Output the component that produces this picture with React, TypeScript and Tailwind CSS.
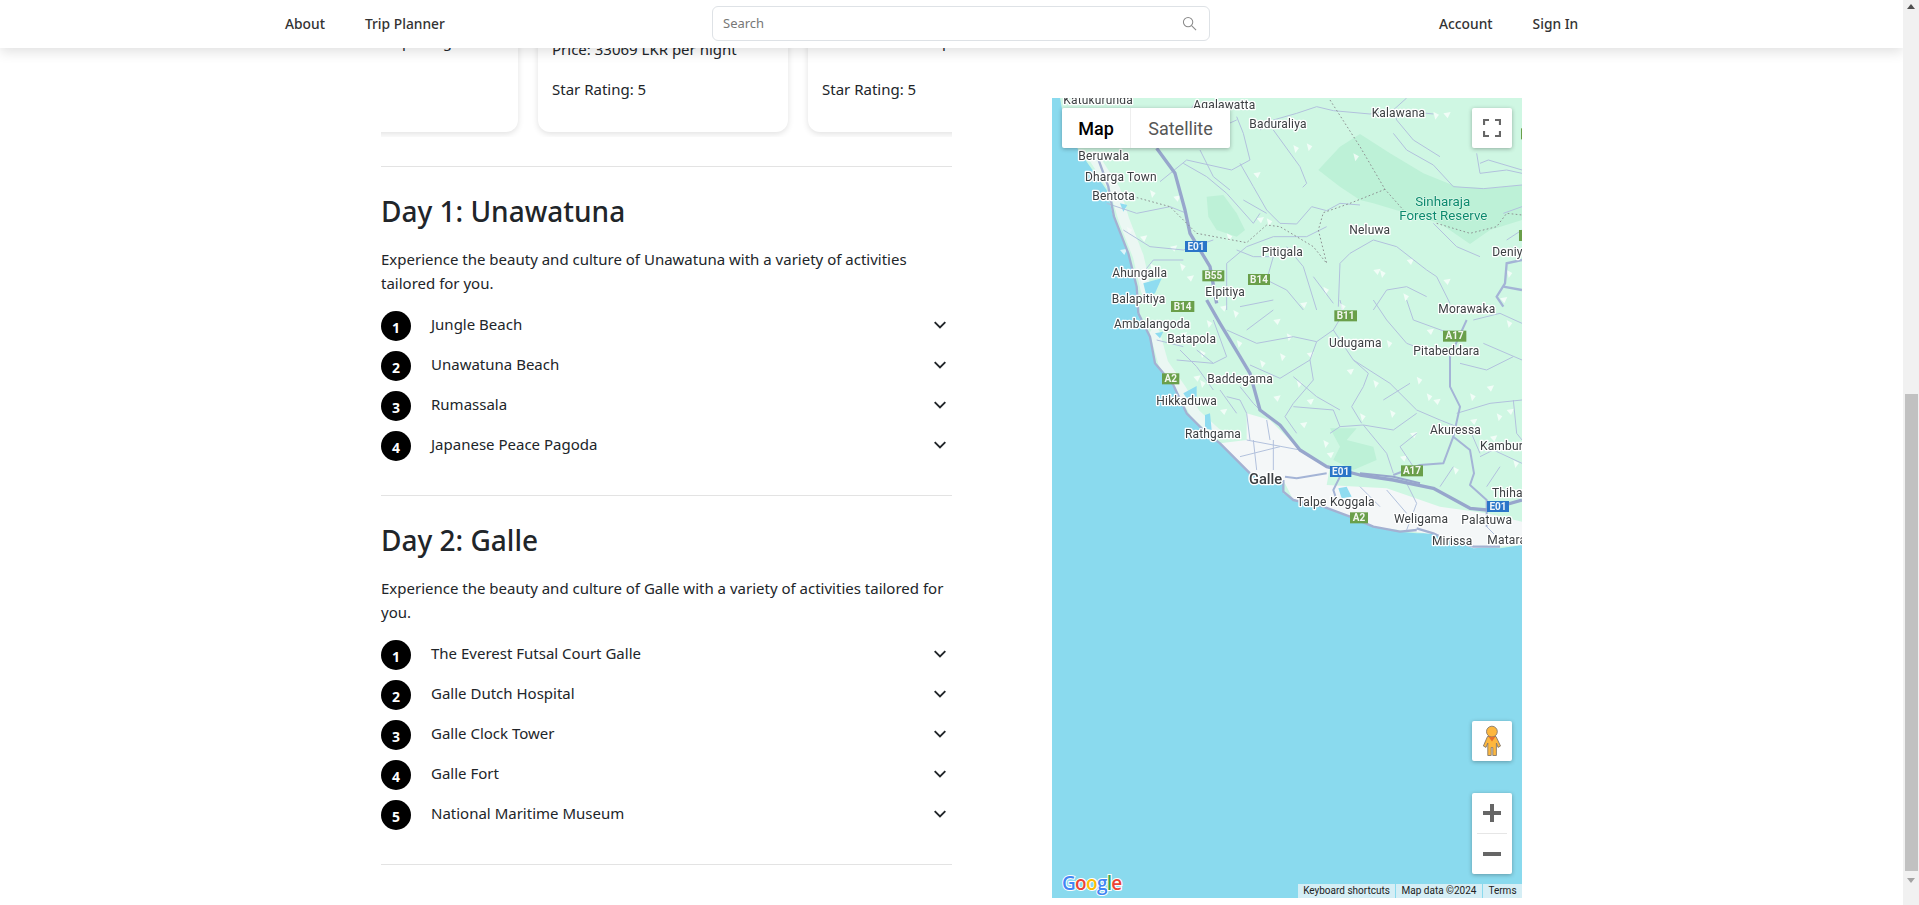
import React from "react";

const font = { fontFamily: '"Noto Sans", "Liberation Sans", sans-serif' };

const shards: number[][] = [
  [760,165,1],[1180,65,1],[1210,70,0],[800,160,1],[640,250,0],[330,300,1],[400,320,0],[680,385,1],[650,385,0],[560,430,1],
  [940,190,1],[1000,540,0],[1020,540,1],[1100,510,0],[1090,610,1],[1210,570,0],[1300,650,1],[1380,625,0],[1100,380,0],[1400,540,1],
  [260,410,1],[300,440,0],[330,520,1],[390,470,0],[420,520,1],[440,560,0],[240,480,0],[300,560,1],[850,590,1],[780,640,0],[900,640,1],
];
const shards4: number[][] = [
  [580,30,1],[700,60,0],[740,100,1],[720,160,1],[800,160,0],[590,120,1],[460,230,0],[480,150,1],[420,100,0],[500,60,1],[770,240,1],
  [800,300,0],[850,420,1],[780,370,0],[960,340,1],[1050,330,1],[1110,400,0],[1130,230,1],[1160,280,1],[1180,300,0],[1290,280,1],
  [1340,260,0],[1370,340,1],[1400,330,0],[1290,360,0],[1240,500,1],[1040,120,1],[1160,90,0],[1400,60,1],[1350,410,0],[1420,480,1],
  [540,330,0],[480,240,1],[700,290,0],[1000,240,1],[540,20,0],[1080,470,0],[860,460,0],[920,210,0],[660,180,1],
];

const roads3 = [
  "M590,80 L610,130 L630,210 L575,240 L440,210 L360,275",
  "M700,120 L780,230 L800,280 L788,292",
  "M600,220 L640,290 L680,360 L720,400 L770,402 L815,350 L860,362 L900,340 L960,345",
  "M430,220 L500,260 L560,310 L640,400 L660,370",
  "M770,70 L830,50 L880,62 L990,72 L1060,60 L1180,72",
  "M1060,130 L1100,180 L1180,225 L1240,290 L1330,296 L1446,285",
  "M1320,220 L1345,210 L1446,240",
  "M560,520 L620,470 L700,440 L800,440 L860,410",
  "M895,650 L900,520 L930,490 L1000,450 L1070,470 L1160,540 L1190,560 L1230,640",
  "M700,500 L680,570 L740,600 L790,660",
  "M440,80 L500,130 L590,90",
  "M200,340 L290,370 L390,350 L440,370",
  "M250,420 L330,470 L430,480 L520,450",
  "M300,560 L340,510 L430,510",
  "M660,120 L700,90 L770,70",
  "M1100,24 L1060,60 L1070,90 L1120,150 L1200,200",
  "M1310,190 L1320,250 L1400,240 L1446,250",
  "M470,30 L440,80 L395,130",
  "M480,180 L520,260 L570,300",
  "M610,330 L680,370",
  "M1400,450 L1446,420",
  "M1000,660 L1040,600 L1100,590 L1160,620",
  "M560,520 L560,660",
  "M590,480 L640,500 L700,500",
  "M820,560 L880,640",
  "M740,470 L790,530 L830,660",
  "M1180,400 L1250,470 L1320,500",
  "M1446,350 L1390,370",
];
const roads3Thick = ["M1390,650 L1370,620 L1395,580 L1400,520 L1446,510", "M1390,590 L1446,600"];
const roads4 = [
  "M560,90 L650,130 L760,110 L830,125 L880,90 L940,180 L985,220 L970,260 L935,320 L965,370",
  "M830,125 L810,180 L720,235 L630,195",
  "M810,180 L820,240 L760,310 L735,350 L770,400",
  "M760,320 L880,330 L900,380",
  "M870,400 L900,380 L970,375 L1060,390 L1130,340",
  "M940,180 L1050,250 L1130,330 L1200,360 L1250,380",
  "M970,375 L1040,460 L1060,520",
  "M1250,340 L1350,310 L1446,300",
  "M1320,470 L1360,450 L1446,490",
  "M1420,300 L1430,400 L1446,420",
  "M620,420 L780,450","M600,470 L720,440","M640,420 L650,510","M700,420 L700,510","M620,340 L630,420","M680,360 L690,420",
  "M520,60 L560,170 L520,190 L470,150","M410,180 L520,190","M350,120 L430,140",
  "M600,260 L640,310 L680,350","M560,290 L600,300 L620,340",
  "M1040,570 L1100,640","M1340,680 L1380,720","M960,560 L1020,620",
  "M1000,0 L1040,60 L1100,130 L1180,160",
  "M1100,0 L1120,60 L1230,100",
  "M1300,60 L1380,40 L1446,70",
  "M1330,130 L1446,180",
  "M1260,190 L1340,210 L1420,170",
  "M1130,400 L1080,440 L1120,500",
  "M600,20 L700,0",
  "M880,90 L910,40 L900,0",
  "M620,90 L700,30",
  "M420,150 L470,200 L520,270",
  "M540,270 L590,340",
  "M760,230 L830,290 L900,330",
  "M1030,300 L1110,250",
  "M1380,500 L1340,560",
  "M1200,560 L1240,500",
  "M1100,550 L1130,610 L1100,690",
  "M1320,460 L1290,390",
];
const roads4Mid = [
  "M1280,60 L1230,170 L1230,260 L1260,320 L1240,410 L1290,450 L1302,520 L1290,555 L1340,600 L1340,680",
  "M1240,410 L1210,490 L1140,495 L1060,525",
  "M900,530 L880,570 L890,600",
  "M735,530 L770,535 L860,520",
];

const labels3: [string, number, number][] = [
  ["Katukurunda",70,41],["Agalawatta",460,58],["Kalawana",995,80],["Baduraliya",628,113],["Beruwala",115,209],["Dharga Town",135,273],
  ["Bentota",157,329],["Pitigala",665,497],["Neluwa",928,431],["Deniy",1357,499],["Ahungalla",217,560],["Elpitiya",496,618],["Balapitiya",215,638],
];
const labels4: [string, number, number][] = [
  ["Morawaka",1195,39],["Ambalangoda",222,83],["Batapola",382,128],["Udugama",867,140],["Pitabeddara",1120,164],["Baddegama",502,248],
  ["Hikkaduwa",349,314],["Rathgama",435,413],["Akuressa",1170,401],["Kamburu",1320,449],["Thihagoda",1356,590],["Talpe",770,617],["Koggala",870,617],
  ["Weligama",1062,669],["Palatuwa",1264,671],["Mirissa",1176,735],["Matara",1342,731],
];
const shields3: [string, number, number, number, string][] = [
  ["E01",435,453,66,"#2a75c8"],["B55",487,541,66,"#6a9f4a"],["B14",624,552,66,"#6a9f4a"],["B14",393,633,70,"#6a9f4a"],
  ["",1443,115,10,"#6a9f4a"],["",1437,420,12,"#6a9f4a"],
];
const shields4: [string, number, number, number, string][] = [
  ["B11",883,31,68,"#6a9f4a"],["A17",1209,92,70,"#6a9f4a"],["A2",366,220,52,"#6a9f4a"],["E01",870,498,64,"#2a75c8"],["A17",1083,496,66,"#6a9f4a"],
  ["E01",1341,603,66,"#2a75c8"],["A2",930,637,54,"#6a9f4a"],
];

function Shield({ s }: { s: [string, number, number, number, string] }) {
  return (
    <g>
      <rect x={s[1]} y={s[2]} width={s[3]} height={33} fill={s[4]} />
      <text x={s[1] + s[3] / 2} y={s[2] + 26} textAnchor="middle" fontSize={30} fontWeight={700} fill="#fff" fontFamily="Roboto, sans-serif" opacity={0.92}>{s[0]}</text>
    </g>
  );
}

function Label({ l }: { l: [string, number, number] }) {
  return (
    <text x={l[1]} y={l[2]} fontSize={36} letterSpacing={0.5} fill="#3c4043" stroke="#fff" strokeWidth={8} strokeLinejoin="round" paintOrder="stroke" fontFamily="Roboto, sans-serif">{l[0]}</text>
  );
}

function shardPts(s: number[]) {
  return s[2]
    ? `${s[0]},${s[1]} ${s[0] + 17},${s[1] + 9} ${s[0] + 6},${s[1] + 24}`
    : `${s[0]},${s[1]} ${s[0] + 22},${s[1] - 4} ${s[0] + 13},${s[1] + 15}`;
}

function MapArt() {
  return (
    <svg viewBox="1052 98 470 800" width="470" height="800" className="block blur-[0.3px]">
      <rect x="1052" y="98" width="470" height="800" fill="#8adaee" />
      <g transform="translate(1040,90) scale(0.33333)">
        <path fill="#cff7e3" d="M60,24 L72,90 L115,180 L200,300 L220,380 L265,490 L290,590 L295,670 L330,740 L345,820 L400,885 L440,970 L490,1020 L540,1060 L600,1120 L630,1150 L730,1170 L730,1210 L760,1230 L850,1250 L930,1280 L1000,1310 L1080,1325 L1130,1330 L1180,1330 L1210,1345 L1300,1370 L1380,1375 L1446,1365 L1446,24 Z" />
        <path fill="#bdf1d7" d="M835,240 L900,170 L960,132 L1050,190 L1150,250 L1250,290 L1350,295 L1446,285 L1446,390 L1350,420 L1290,462 L1200,400 L1000,340 L960,330 L900,290 Z" />
        <path fill="#bdf1d7" d="M500,320 L550,315 L590,370 L615,420 L590,440 L530,420 L505,380 Z" />
      </g>
      <g transform="translate(1040,300) scale(0.33333)">
        <path fill="#f4f7f8" d="M620,340 L690,360 L780,450 L870,500 L860,555 L1040,565 L1200,620 L1340,640 L1446,665 L1446,735 L1300,745 L1200,705 L1000,680 L850,620 L760,600 L730,540 L630,520 L600,490 L540,430 L620,420 Z" />
        <path fill="#bdf1d7" d="M870,385 L950,385 L920,420 L1000,440 L1010,480 L940,510 L880,480 L900,440 Z" />
        <path fill="none" stroke="#f4f7f8" strokeOpacity={0.75} strokeWidth={30} strokeLinecap="round" d="M345,100 L370,190 L425,270 L465,340 L530,400" />
        {shards4.map((s, i) => <polygon key={i} fill="#ffffff" fillOpacity={0.7} points={shardPts(s)} />)}
        <path fill="#8fdcf0" d="M430,280 L470,258 L470,290 L440,295 Z M495,345 L510,340 L515,390 L495,385 Z M895,565 L920,560 L935,590 L905,595 Z M345,100 L370,95 L360,115 Z" />
        {roads4.map((d, i) => <path key={i} d={d} fill="none" stroke="#b2c1dd" strokeWidth={3} />)}
        {roads4Mid.map((d, i) => <path key={i} d={d} fill="none" stroke="#a4b4d6" strokeWidth={6} strokeLinejoin="round" />)}
        <path fill="none" stroke="#a4b1d2" strokeWidth={7} strokeLinejoin="round" d="M295,40 L330,110 L345,190 L400,255 L440,340 L490,390 L540,430 L600,490 L630,520 M730,540 L730,575 L760,600 L850,620 L930,650 L1000,680 L1080,695 L1130,690 M1130,685 L1180,700 L1210,715 L1300,740 L1380,740" />
        <path fill="none" stroke="#97a6cc" strokeWidth={10} strokeLinejoin="round" d="M500,0 L540,70 L600,170 L630,220 L660,330 L720,375 L780,450 L860,500 L960,525 L1060,540 L1180,565 L1290,625 L1340,630 L1446,600" />
        <path fill="none" stroke="#97a6cc" strokeWidth={6} d="M960,520 L1060,530 L1140,550" />
      </g>
      <g transform="translate(1040,90) scale(0.33333)">
        {shards.map((s, i) => <polygon key={i} fill="#ffffff" fillOpacity={0.7} points={shardPts(s)} />)}
        <path fill="none" stroke="#f4f7f8" strokeOpacity={0.75} strokeWidth={32} strokeLinecap="round" d="M160,200 L225,300 L252,390 L295,500 L318,600" />
        <path fill="#8fdcf0" d="M310,580 L365,565 L345,610 L320,620 Z M240,340 L262,345 L250,365 Z" />
        {roads3.map((d, i) => <path key={i} d={d} fill="none" stroke="#b2c1dd" strokeWidth={3} />)}
        {roads3Thick.map((d, i) => <path key={i} d={d} fill="none" stroke="#a4b4d6" strokeWidth={7} />)}
        <path fill="none" stroke="#a4b1d2" strokeWidth={7} strokeLinejoin="round" d="M172,200 L205,290 L222,380 L265,490 L290,590 L295,670" />
        <path fill="none" stroke="#97a6cc" strokeWidth={10} strokeLinejoin="round" d="M350,175 L405,250 L435,360 L450,430 L510,530 L530,640" />
        <path fill="none" stroke="#8d9192" strokeWidth={3} strokeDasharray="5 7" d="M870,30 L960,170 L1035,298 L1090,360 M1035,298 L930,340 L850,368 L835,420 L860,520 L820,470 L720,410 L680,405 L620,458 L470,430 L390,350 L280,320 M1190,400 L1290,430 L1370,410 L1400,370 L1446,375" />
      </g>
      <g transform="translate(1040,90) scale(0.33333)">
        {labels3.map((l, i) => <Label key={i} l={l} />)}
        {shields3.map((s, i) => <Shield key={i} s={s} />)}
        <text fontSize={40} fill="#0b8a6d" stroke="#fff" strokeOpacity={0.6} strokeWidth={3} paintOrder="stroke" fontFamily="Roboto, sans-serif" textAnchor="middle">
          <tspan x="1208" y="347">Sinharaja</tspan>
          <tspan x="1210" y="389">Forest Reserve</tspan>
        </text>
      </g>
      <g transform="translate(1040,300) scale(0.33333)">
        {labels4.map((l, i) => <Label key={i} l={l} />)}
        <text x={627} y={552} fontSize={44} fontWeight={500} fill="#3c4043" stroke="#fff" strokeWidth={8} strokeLinejoin="round" paintOrder="stroke" fontFamily="Roboto, sans-serif">Galle</text>
        {shields4.map((s, i) => <Shield key={i} s={s} />)}
      </g>
    </svg>
  );
}

function MapPanel() {
  const sh = "shadow-[0_1px_4px_rgba(0,0,0,0.3)]";
  return (
    <div className="relative w-[470px] h-[800px] mt-[116px] overflow-hidden shrink-0" style={{ fontFamily: "Roboto, sans-serif" }}>
      <MapArt />
      <div className={`absolute left-[10px] top-[10px] h-[40px] w-[168px] bg-white flex rounded-[2px] text-[18px] ${sh}`}>
        <div className="w-[69px] flex items-center justify-center text-black font-medium border-r border-[#eeeeee]">Map</div>
        <div className="flex-1 flex items-center justify-center text-[#565656]">Satellite</div>
      </div>
      <div className={`absolute left-[420px] top-[10px] w-[40px] h-[40px] bg-white rounded-[2px] flex items-center justify-center ${sh}`}>
        <svg width="18" height="18" viewBox="0 0 18 18" fill="none" stroke="#666666" strokeWidth="2.2">
          <path d="M1 6 V1 H6 M12 1 H17 V6 M17 12 V17 H12 M6 17 H1 V12" />
        </svg>
      </div>
      <div className={`absolute left-[420px] top-[623px] w-[40px] h-[40px] bg-white rounded-[2px] ${sh}`}>
        <svg width="40" height="40" viewBox="0 0 40 40">
          <path d="M15.5 15.5 H24 L28.5 25 L26 26.4 L24.4 22 V34.5 H20.8 V26.5 H19.2 V34.5 H15.8 V22 L14 26.4 L11.4 25 Z" fill="#fdb73e" stroke="#85786a" strokeWidth="0.9" strokeLinejoin="round" />
          <circle cx="19.9" cy="10.6" r="5.4" fill="#fdb73e" stroke="#85786a" strokeWidth="0.9" />
          <path d="M16.5 15.8 L20 20.5 L23.4 15.8 Z" fill="#e8702a" />
        </svg>
      </div>
      <div className={`absolute left-[420px] top-[695px] w-[40px] h-[81px] bg-white rounded-[2px] flex flex-col items-center ${sh}`}>
        <div className="h-[40px] flex items-center justify-center">
          <svg width="18" height="18" viewBox="0 0 18 18" fill="#666666"><path d="M7 0 H11 V7 H18 V11 H11 V18 H7 V11 H0 V7 H7 Z" /></svg>
        </div>
        <div className="h-px w-[30px] bg-[#e6e6e6]" />
        <div className="h-[40px] flex items-center justify-center">
          <svg width="18" height="18" viewBox="0 0 18 18" fill="#666666"><rect x="0" y="7" width="18" height="4" /></svg>
        </div>
      </div>
      <svg className="absolute left-[8px] bottom-[1px]" width="64" height="26" viewBox="0 0 64 26">
        <text x="2" y="19" fontSize="19" fontWeight="600" stroke="#fff" strokeWidth="2" paintOrder="stroke" fontFamily='"Open Sans", Roboto, sans-serif' letterSpacing="-0.7">
          <tspan fill="#4285f4">G</tspan><tspan fill="#ea4335">o</tspan><tspan fill="#fbbc05">o</tspan><tspan fill="#4285f4">g</tspan><tspan fill="#34a853">l</tspan><tspan fill="#ea4335">e</tspan>
        </text>
      </svg>
      <div className="absolute right-0 bottom-0 h-[14px] flex gap-px text-[10px] leading-[14px] text-[#222222]">
        <div className="bg-[#d5eef5] w-[97px] text-center">Keyboard shortcuts</div>
        <div className="bg-[#d5eef5] w-[86px] text-center">Map data ©2024</div>
        <div className="bg-[#d5eef5] w-[39px] text-center">Terms</div>
      </div>
    </div>
  );
}

function Chevron() {
  return (
    <svg width="14" height="14" viewBox="0 0 14 14" fill="none" stroke="#212529" strokeWidth="1.9" className="mr-[5px] -mt-[2px]">
      <path d="M1.7 4.2 L7 9.5 L12.3 4.2" />
    </svg>
  );
}

function Row({ n, text }: { n: number; text: string }) {
  return (
    <div className="flex items-center h-[30px] mb-[10px] last:mb-0">
      <div className="w-[30px] h-[30px] rounded-full bg-black text-white flex items-center justify-center text-[14px] font-bold pt-[2px]">{n}</div>
      <div className="flex-1 pl-[20px] -mt-[3px] text-[15px] text-[#212529]">{text}</div>
      <Chevron />
    </div>
  );
}

function Day({ title, intro, items }: { title: string; intro: string; items: string[] }) {
  return (
    <section className="border-t border-[#e3e3e3] pt-[27px] pb-[34px]">
      <h2 className="text-[28px] leading-[34px] font-medium text-[#212529] mb-[19px]">{title}</h2>
      <p className="text-[15px] leading-[24px] text-[#212529] mb-[16px]">{intro}</p>
      <div>
        {items.map((t, i) => <Row key={t} n={i + 1} text={t} />)}
      </div>
    </section>
  );
}

function Card({ first, second }: { first: string; second: boolean }) {
  return (
    <div className="w-[250px] h-[150px] shrink-0 bg-white rounded-[12px] shadow-[0_2px_6px_rgba(0,0,0,0.12)] pl-[14px] pr-[15px] pb-[31px] mb-0 flex flex-col justify-end text-[15px] leading-[24px] text-[#212529]">
      <p className={second ? "mb-[16px] whitespace-nowrap" : "mb-[24px] whitespace-nowrap"}>{first}</p>
      <p>Star Rating: 5</p>
    </div>
  );
}

export default function App() {
  return (
    <div className="relative flex h-[905px] w-full overflow-hidden bg-white" style={font}>
      <div className="flex-1 min-w-0 relative">
        <header className="absolute left-0 right-0 top-0 z-10 h-[48px] bg-white shadow-[0_4px_12px_rgba(0,0,0,0.12)] flex items-center pl-[285px] text-[13.8px] font-medium text-[#333333]">
          <nav className="w-[427px] flex gap-[40px]">
            <span>About</span>
            <span>Trip Planner</span>
          </nav>
          <div className="w-[498px] h-[35px] -mt-[2px] border border-[#dee2e6] rounded-[6px] flex items-center justify-between pl-[10px] pr-[12px] bg-white">
            <span className="text-[13px] font-normal text-[#777777] pt-[1px]">Search</span>
            <svg width="15" height="15" viewBox="0 0 16 16" fill="none" stroke="#8a8a8a" strokeWidth="1.1"><circle cx="6.5" cy="6.5" r="5" /><path d="M10.2 10.2 L15 15" /></svg>
          </div>
          <nav className="pl-[229px] flex gap-[40px]">
            <span>Account</span>
            <span>Sign In</span>
          </nav>
        </header>
        <main className="flex pl-[381px] -mt-[18px] gap-[100px]">
          <div className="w-[571px] shrink-0">
            <div className="flex gap-[20px] overflow-hidden h-[155px] pb-[5px]">
              <div className="flex gap-[20px] -ml-[113px]">
                <Card first="Price: 33069 LKR per night" second={false} />
                <Card first="Price: 33069 LKR per night" second />
                <Card first="Price: 33069 LKR per night" second={false} />
              </div>
            </div>
            <div className="mt-[29px]">
              <Day title="Day 1: Unawatuna" intro="Experience the beauty and culture of Unawatuna with a variety of activities tailored for you." items={["Jungle Beach", "Unawatuna Beach", "Rumassala", "Japanese Peace Pagoda"]} />
              <Day title="Day 2: Galle" intro="Experience the beauty and culture of Galle with a variety of activities tailored for you." items={["The Everest Futsal Court Galle", "Galle Dutch Hospital", "Galle Clock Tower", "Galle Fort", "National Maritime Museum"]} />
              <div className="border-t border-[#e3e3e3]" />
            </div>
          </div>
          <MapPanel />
        </main>
      </div>
      <div className="w-[16px] shrink-0 bg-[#f1f1f1] flex flex-col items-center relative z-20">
        <svg width="16" height="17" viewBox="0 0 16 17" fill="#505050"><path d="M8 4 L12 9 H4 Z" /></svg>
        <div className="w-[13px] ml-px h-[477px] mt-[377px] bg-[#c1c1c1]" />
        <svg width="16" height="17" viewBox="0 0 16 17" fill="#a3a3a3"><path d="M8 12 L12 7 H4 Z" /></svg>
      </div>
    </div>
  );
}
